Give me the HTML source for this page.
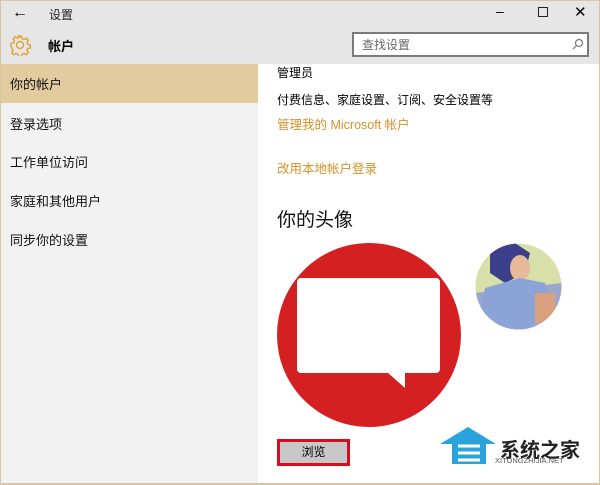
<!DOCTYPE html>
<html><head><meta charset="utf-8"><style>
*{margin:0;padding:0;box-sizing:border-box}
body{width:600px;height:485px;overflow:hidden;background:#fff;font-family:"Liberation Sans","Noto Sans CJK SC",sans-serif;position:relative;color:#000}
.a{position:absolute}
.frame{position:absolute;left:0;top:0;width:600px;height:485px;border:1px solid #d9c6a0;border-bottom-width:2px;pointer-events:none}
.side div.i{position:absolute;left:10px;font-size:13px;color:#111}
.or{color:#d4922a;font-size:13px}
</style></head><body>
<div class="a" style="left:0;top:0;width:600px;height:64px;background:#e6e6e6"></div>
<div class="a" style="left:12px;top:4px;font-size:16px">&#8592;</div>
<div class="a" style="left:49px;top:6px;font-size:12px;color:#222">设置</div>
<div class="a" style="left:496px;top:3px;font-size:14px">&#8211;</div>
<div class="a" style="left:538px;top:7px;width:10px;height:10px;border:1px solid #222"></div>
<div class="a" style="left:574px;top:3px;font-size:15px">&#10005;</div>
<svg class="a" style="left:9px;top:34px" width="22" height="22" viewBox="0 0 22 22"><g fill="none" stroke="#e0a030" stroke-width="1.4"><circle cx="11" cy="11" r="3.5"/><path d="M9.5 2h3l.5 2.5 2 1 2.2-1.4 2.1 2.1-1.4 2.2 1 2 2.5.5v3l-2.5.5-1 2 1.4 2.2-2.1 2.1-2.2-1.4-2 1-.5 2.5h-3l-.5-2.5-2-1-2.2 1.4-2.1-2.1 1.4-2.2-1-2L2 12.5v-3l2.5-.5 1-2L4.1 4.8l2.1-2.1 2.2 1.4 2-1z"/></g></svg>
<div class="a" style="left:48px;top:36px;font-size:13px;font-weight:bold">帐户</div>
<div class="a" style="left:352px;top:32px;width:237px;height:25px;border:2px solid #7a7a7a;background:#fff"></div>
<div class="a" style="left:362px;top:36px;font-size:12px;color:#666">查找设置</div>
<svg class="a" style="left:572px;top:38px" width="12" height="12"><circle cx="7" cy="5" r="3.5" fill="none" stroke="#777" stroke-width="1.2"/><path d="M4.5 7.5L1 11" stroke="#777" stroke-width="1.2"/></svg>
<div class="side">
<div class="a" style="left:0;top:64px;width:258px;height:421px;background:#f2f2f2"></div>
<div class="a" style="left:0;top:64px;width:258px;height:39px;background:#e3cba0"></div>
<div class="i" style="top:74px">你的帐户</div>
<div class="i" style="top:114px">登录选项</div>
<div class="i" style="top:152px">工作单位访问</div>
<div class="i" style="top:191px">家庭和其他用户</div>
<div class="i" style="top:230px">同步你的设置</div>
</div>
<div class="a" style="left:277px;top:64px;font-size:12px">管理员</div>
<div class="a" style="left:277px;top:91px;font-size:12px">付费信息、家庭设置、订阅、安全设置等</div>
<div class="a or" style="left:277px;top:114px;font-size:12.5px">管理我的 Microsoft 帐户</div>
<div class="a or" style="left:277px;top:158px;font-size:12.5px">改用本地帐户登录</div>
<div class="a" style="left:277px;top:205px;font-size:19px;color:#111">你的头像</div>
<svg class="a" style="left:277px;top:243px" width="186" height="186"><circle cx="92" cy="92" r="92" fill="#d42020"/><path d="M24 35h135a4 4 0 0 1 4 4v87a4 4 0 0 1-4 4H128v15l-17-15H24a4 4 0 0 1-4-4V39a4 4 0 0 1 4-4z" fill="#fff"/></svg>
<svg class="a" style="left:475px;top:243px" width="87" height="87"><defs><clipPath id="c"><circle cx="43.5" cy="43.5" r="43"/></clipPath></defs><g clip-path="url(#c)"><rect width="87" height="87" fill="#d9dfa8"/><path d="M0 50 L87 40 V87 H0z" fill="#9aa6cc"/><path d="M15 5 L40 0 L55 10 L50 30 L30 40 L15 30 z" fill="#3b3f8c"/><ellipse cx="45" cy="25" rx="10" ry="13" fill="#e7b99a"/><path d="M10 45 L45 35 L70 40 L75 60 L55 87 L20 87 L5 70z" fill="#8ba3d6"/><path d="M60 50 L80 50 L80 80 L60 80z" fill="#d9a07e"/></g></svg>
<div class="a" style="left:277px;top:439px;width:73px;height:27px;border:3px solid #d10f1f;background:#c8c8c8;font-size:12px;text-align:center;line-height:21px">浏览</div>
<svg class="a" style="left:438px;top:424px" width="64" height="44"><path d="M2 20 L30 3 L58 20 L48 20 L48 40 L14 40 L14 20z" fill="#2aa3dc"/><path d="M20 22h22M20 29h22M20 36h22" stroke="#fff" stroke-width="3"/></svg>
<div class="a" style="left:500px;top:434px;font-size:20px;font-weight:bold;color:#222">系统之家</div>
<div class="a" style="left:495px;top:456px;font-size:7.5px;color:#555">XITONGZHIJIA.NET</div>
<div class="frame"></div>
</body></html>
